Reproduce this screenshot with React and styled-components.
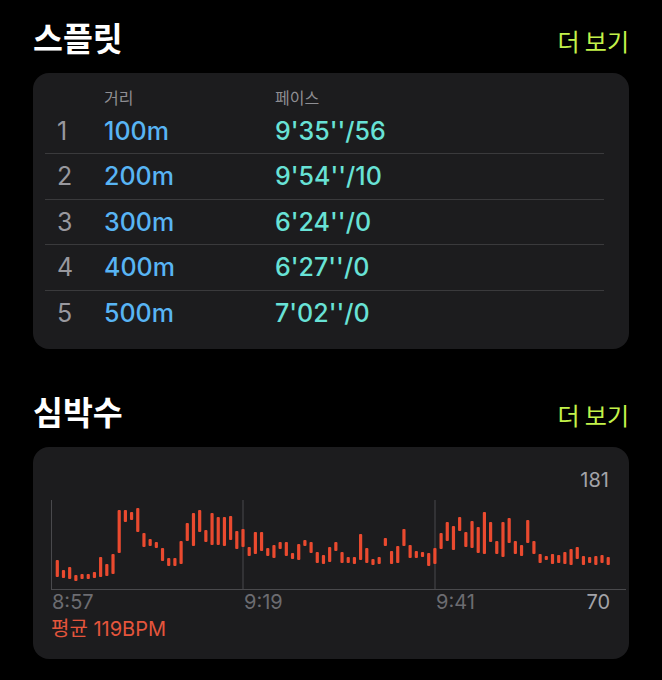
import React from 'react';
import styled, { createGlobalStyle } from 'styled-components';

const GlobalStyle = createGlobalStyle`
	body {
		margin: 0;
		background: #000;
		font-family: "Inter", "Noto Sans CJK KR", sans-serif;
		-webkit-font-smoothing: antialiased;
	}
`;

const Page = styled.div`
	padding: 12px 33px 20px 33px;
	background: #000;
	min-height: 648px;
`;

const Section = styled.section`
	& + & {
		margin-top: 37px;
	}
`;

const SectionHeader = styled.div`
	display: flex;
	justify-content: space-between;
	align-items: baseline;
	height: 50px;
	margin-bottom: 11px;
`;

const Title = styled.h2`
	margin: 0;
	color: #fff;
	font-size: 32.5px;
	font-weight: 700;
	line-height: 50px;
	font-family: "Noto Sans CJK KR", sans-serif;
`;

const MoreLink = styled.span`
	color: #c3f24a;
	font-size: 24px;
	font-family: "Noto Sans CJK KR", sans-serif;
	cursor: pointer;
`;

const Card = styled.div`
	background: #1c1c1e;
	border-radius: 16px;
	padding: ${({ $padding }) => $padding};
`;

const TableRow = styled.div`
	display: grid;
	grid-template-columns: 47px 171px 1fr;
	align-items: center;
	margin: 0 25px 0 12px;
	padding-left: 12px;
	height: ${({ $head }) => ($head ? '23.5px' : '45.5px')};
	box-sizing: border-box;
	border-bottom: ${({ $line }) => ($line ? '1px solid #3a3a3c' : 'none')};
`;

const colors = {
	index: '#98989e',
	head: '#8e8e93',
	distance: '#58b4f4',
	pace: '#68e2d6',
};

const Cell = styled.span`
	color: ${({ $tone }) => colors[$tone]};
	font-size: ${({ $tone }) => ($tone === 'head' ? '16px' : '25px')};
	font-weight: ${({ $tone }) => ($tone === 'head' || $tone === 'index' ? 400 : 500)};
	font-family: ${({ $tone }) =>
		$tone === 'head' ? '"Noto Sans CJK KR", sans-serif' : '"Inter", "Noto Sans CJK KR", sans-serif'};
	white-space: nowrap;
`;

const ChartTop = styled.div`
	text-align: right;
	padding-right: 17px;
	font-size: 20px;
	line-height: 24px;
	color: #a3a3a8;
`;

const AxisRow = styled.div`
	display: grid;
	grid-template-columns: 192px 192px 1fr;
	font-size: 20px;
	line-height: 24px;
`;

const TimeLabel = styled.span`
	color: #6c6c71;
	padding-left: 1px;
`;

const LastAxis = styled.div`
	display: flex;
	justify-content: space-between;
	padding-right: 16px;
`;

const MinLabel = styled.span`
	color: #a3a3a8;
`;

const Average = styled.div`
	color: #e4553c;
	font-size: 20px;
	line-height: 30px;
`;

const ChartSvg = styled.svg`
	display: block;
`;

const splits = [
	['1', '100m', "9'35''/56"],
	['2', '200m', "9'54''/10"],
	['3', '300m', "6'24''/0"],
	['4', '400m', "6'27''/0"],
	['5', '500m', "7'02''/0"],
];

// [top, bottom] of each bar in page pixels
const bars = [
	[560, 577], [570, 578], [567, 579], [575, 581], [574, 579], [574, 579], [572, 578], [557, 577],
	[564, 576], [554, 574], [510, 553], [510, 522], [512, 520], [508, 532], [533, 547], [539, 546],
	[542, 548], [548, 561], [558, 566], [558, 566], [541, 564], [523, 541], [513, 546], [510, 532],
	[530, 542], [513, 545], [517, 545], [517, 546], [516, 540], [531, 549], [529, 547], [547, 556],
	[532, 554], [532, 551], [548, 556], [545, 558], [542, 549], [542, 556], [553, 559], [544, 560],
	[540, 546], [542, 553], [552, 563], [555, 564], [547, 562], [542, 551], [552, 563], [557, 563],
	[557, 564], [534, 560], [548, 563], [559, 565], [557, 564], [538, 546], [551, 564], [546, 563],
	[529, 546], [545, 558], [551, 558], [552, 557], [553, 566], [548, 564], [533, 549], [522, 541],
	[526, 550], [517, 531], [532, 547], [521, 548], [527, 553], [512, 554], [522, 542], [541, 554],
	[522, 557], [518, 543], [541, 554], [545, 556], [520, 543], [541, 554], [554, 563], [556, 560],
	[554, 564], [555, 563], [552, 564], [549, 565], [547, 559], [556, 565], [557, 563], [556, 565],
	[555, 563], [557, 565],
];

const HeartChart = () => (
	<ChartSvg width="575" height="98" viewBox="0 0 575 98">
		<g stroke="#49494c" strokeWidth="1">
			<line x1="0.5" y1="8" x2="0.5" y2="98" />
			<line x1="192" y1="8" x2="192" y2="98" />
			<line x1="384" y1="8" x2="384" y2="98" />
			<line x1="0" y1="97.5" x2="575" y2="97.5" />
		</g>
		{bars.map(([top, bottom], i) => (
			<rect
				key={i}
				x={6.3 + 6.19 * i - 1.6}
				y={top - 492}
				width="3.2"
				height={bottom - top}
				rx="1"
				fill="#ea4a2f"
			/>
		))}
	</ChartSvg>
);

export default function App() {
	return (
		<Page>
			<GlobalStyle />
			<Section>
				<SectionHeader>
					<Title>스플릿</Title>
					<MoreLink>더 보기</MoreLink>
				</SectionHeader>
				<Card $padding="12px 0 12.5px 0">
					<TableRow $head>
						<span />
						<Cell $tone="head">거리</Cell>
						<Cell $tone="head">페이스</Cell>
					</TableRow>
					{splits.map(([n, dist, pace], i) => (
						<TableRow key={n} $line={i < splits.length - 1}>
							<Cell $tone="index">{n}</Cell>
							<Cell $tone="distance">{dist}</Cell>
							<Cell $tone="pace">{pace}</Cell>
						</TableRow>
					))}
				</Card>
			</Section>
			<Section>
				<SectionHeader>
					<Title>심박수</Title>
					<MoreLink>더 보기</MoreLink>
				</SectionHeader>
				<Card $padding="21px 3px 15px 18px">
					<ChartTop>181</ChartTop>
					<HeartChart />
					<AxisRow>
						<TimeLabel>8:57</TimeLabel>
						<TimeLabel>9:19</TimeLabel>
						<LastAxis>
							<TimeLabel>9:41</TimeLabel>
							<MinLabel>70</MinLabel>
						</LastAxis>
					</AxisRow>
					<Average>평균 119BPM</Average>
				</Card>
			</Section>
		</Page>
	);
}
